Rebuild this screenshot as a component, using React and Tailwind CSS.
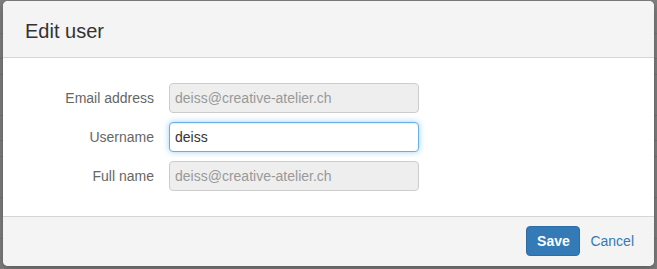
const fields = [
  { label: "Email address", value: "deiss@creative-atelier.ch", disabled: true },
  { label: "Username", value: "deiss", focused: true },
  { label: "Full name", value: "deiss@creative-atelier.ch", disabled: true },
];

const backdropLines = [33, 58, 74, 115, 140, 156, 197, 238];

function Field({ label, value, disabled, focused }) {
  let box = "border-[#ccc] bg-white text-[#333]";
  if (disabled) box = "border-[#ccc] bg-[#eee] text-[#999]";
  if (focused)
    box =
      "border-[#66afe9] bg-white text-[#333] shadow-[inset_0_1px_1px_rgba(0,0,0,0.075),0_0_6px_rgba(102,175,233,0.6)]";

  return (
    <div className="flex items-center">
      <label className="w-[151px] text-right text-[14px] text-[#666]">{label}</label>
      <div
        className={`ml-[15px] flex h-[30px] w-[250px] items-center rounded-[4px] border px-[5px] text-[14px] ${box}`}
      >
        {value}
      </div>
    </div>
  );
}

export default function App() {
  return (
    <div
      className="relative h-[269px] w-[657px] overflow-hidden bg-[#7f7f7f]"
      style={{ fontFamily: '"Liberation Sans", Arial, sans-serif' }}
    >
      {backdropLines.map((y) => (
        <div key={y} className="absolute left-0 right-0 h-px bg-[#737373]" style={{ top: y }} />
      ))}

      <div className="relative ml-[3px] mt-[1px] w-[651px] overflow-hidden rounded-[5px] bg-white shadow-[0_3px_9px_rgba(0,0,0,0.3)]">
        <div className="flex h-[57px] items-center border-b border-[#d5d5d5] bg-[#f4f4f4] px-[22px] pt-[3px]">
          <h4 className="text-[20px] leading-none text-[#333]">Edit user</h4>
        </div>

        <div className="flex flex-col gap-[9px] py-[25px]">
          {fields.map((f) => (
            <Field key={f.label} {...f} />
          ))}
        </div>

        <div className="flex h-[50px] items-start justify-end gap-[10px] border-t border-[#d5d5d5] bg-[#f4f4f4] pr-[20px] pt-[9px]">
          <button className="h-[30px] w-[54px] rounded-[4px] border border-[#2e6da4] bg-[#337ab7] text-[14px] font-bold text-white">
            Save
          </button>
          <a className="flex h-[30px] items-center text-[14px] text-[#337ab7]">Cancel</a>
        </div>
      </div>
    </div>
  );
}
